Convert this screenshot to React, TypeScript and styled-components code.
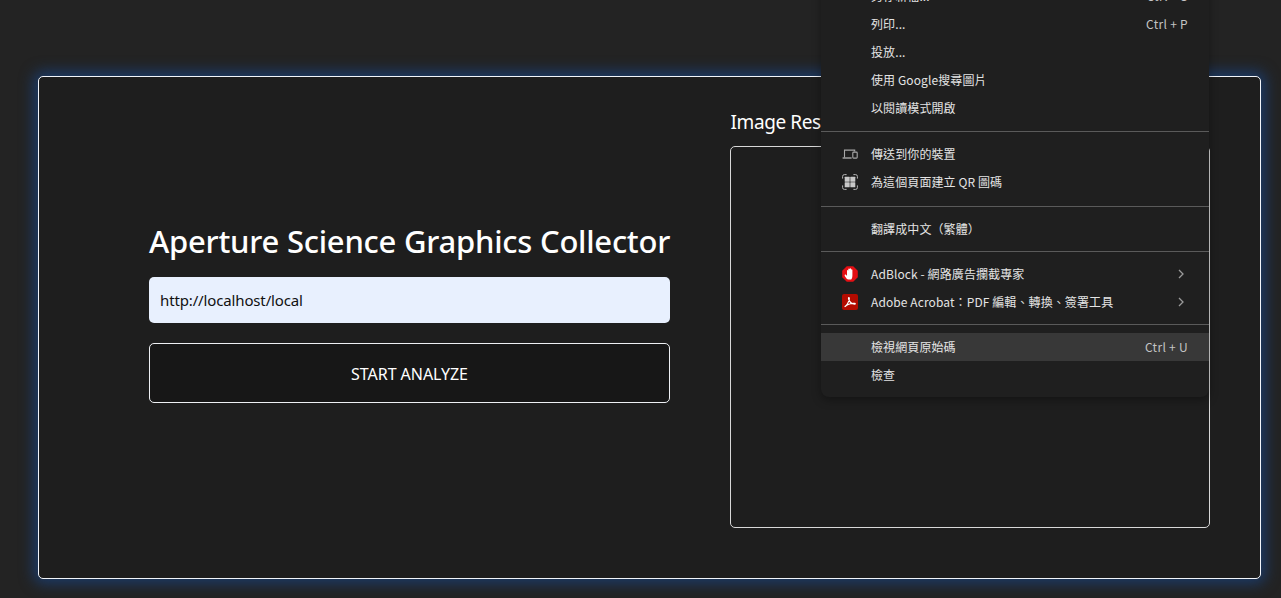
import React from "react";
import styled, { createGlobalStyle } from "styled-components";

const Global = createGlobalStyle`
  html, body { margin: 0; padding: 0; background: #232323; }
  #root { height: 598px; overflow: hidden; }
  * { box-sizing: border-box; }
`;

const Page = styled.div`
  position: relative;
  height: 598px;
  padding: 76px 20px 0 38px;
  overflow: hidden;
  font-family: "Noto Sans", "Open Sans", "Liberation Sans", sans-serif;
  color: #fff;
`;

const Card = styled.main`
  width: 1223px;
  height: 503px;
  display: flex;
  gap: 60px;
  padding: 0 50px 0 110px;
  background: #1e1e1e;
  border: 1px solid #f2f5fa;
  border-radius: 5px;
  box-shadow: 0 0 14px 5px #1c3a66;
`;

const FormColumn = styled.section`
  width: 521px;
  display: flex;
  flex-direction: column;
  padding-top: 143px;
`;

const Title = styled.h1`
  margin: 0 0 14px;
  font-size: 31px;
  line-height: 43px;
  font-weight: 500;
  white-space: nowrap;
  letter-spacing: -0.24px;
`;

const UrlInput = styled.div`
  height: 46px;
  display: flex;
  align-items: center;
  padding: 0 11px;
  background: #e8f0fe;
  border-radius: 5px;
  color: #111;
  font-size: 15px;
  letter-spacing: -0.14px;
`;

const StartButton = styled.button`
  height: 60px;
  margin-top: 20px;
  padding: 2px 0 0;
  background: #171717;
  color: #fff;
  border: 1px solid #eef0f4;
  border-radius: 5px;
  font-family: inherit;
  font-size: 16px;
  font-weight: 400;
  letter-spacing: -0.05px;
`;

const ResultsColumn = styled.section`
  width: 480px;
  display: flex;
  flex-direction: column;
  padding-top: 30px;
`;

const ResultsTitle = styled.h2`
  margin: 0 0 9px;
  padding-left: 0.5px;
  font-size: 19px;
  line-height: 30px;
  font-weight: 400;
  letter-spacing: -0.4px;
  white-space: nowrap;
`;

const ResultsBox = styled.div`
  height: 382px;
  border: 1px solid #d8d8d8;
  border-radius: 5px;
`;

const Menu = styled.nav`
  position: absolute;
  left: 821px;
  top: -18px;
  width: 388px;
  height: 415px;
  display: flex;
  flex-direction: column;
  background: #1f1f1f;
  border-radius: 0 0 8px 8px;
  box-shadow: 0 3px 10px rgba(0, 0, 0, 0.35);
  font-family: "Noto Sans CJK TC", "Noto Sans", sans-serif;
  font-size: 12px;
  color: #e4e4e4;
`;

const Row = styled.div<{ $active?: boolean }>`
  height: 28px;
  flex: none;
  display: flex;
  align-items: center;
  padding: 0 21px;
  background: ${(p) => (p.$active ? "#383838" : "transparent")};
  letter-spacing: 0.1px;
`;

const IconSlot = styled.span`
  width: 29px;
  flex: none;
  display: flex;
  align-items: center;
`;

const Label = styled.span`
  flex: 1;
  padding-bottom: 2px;
  white-space: nowrap;
`;

const Shortcut = styled.span`
  padding-bottom: 2px;
  color: #c4c4c4;
  white-space: nowrap;
  letter-spacing: 0.3px;
`;

const Chevron = styled.svg`
  width: 8px;
  height: 10px;
  margin-right: 3px;
  flex: none;
`;

const Divider = styled.hr<{ $before: number; $after: number }>`
  flex: none;
  width: 100%;
  height: 1px;
  border: 0;
  margin: ${(p) => p.$before}px 0 ${(p) => p.$after}px;
  background: #5a5a5a;
`;

const DevicesIcon = () => (
  <svg width="16" height="16" viewBox="0 0 16 16" fill="none" stroke="#a8a8a8" strokeWidth="1.1">
    <path d="M2.500 11.500V4.100h10.200V5.500" />
    <path d="M.6 12h9" strokeWidth="1.400" />
    <rect x="10.800" y="6.100" width="4.400" height="6" rx=".8" />
  </svg>
);

const QrIcon = () => (
  <svg width="16" height="16" viewBox="0 0 16 16" fill="none">
    <path d="M4.600.6H2.400A1.800 1.800 0 0 0 .6 2.400v2.200M11.400.6h2.200a1.800 1.800 0 0 1 1.800 1.800v2.200M4.600 15.400H2.400a1.800 1.800 0 0 1-1.800-1.800v-2.200M11.400 15.400h2.200a1.800 1.800 0 0 0 1.800-1.800v-2.200" stroke="#b5b5b5" strokeWidth="1" />
    <rect x="2.700" y="2.700" width="5" height="5" rx=".5" fill="#c8c8c8" />
    <rect x="8.300" y="2.700" width="5" height="5" rx=".5" fill="#c8c8c8" />
    <rect x="2.700" y="8.300" width="5" height="5" rx=".5" fill="#c8c8c8" />
    <rect x="8.300" y="8.300" width="5" height="5" rx=".5" fill="#c8c8c8" />
  </svg>
);

const AdBlockIcon = () => (
  <svg width="16" height="16" viewBox="0 0 16 16">
    <path d="M4.800.2h6.400l4.600 4.600v6.400l-4.600 4.600H4.800L.2 11.200V4.800z" fill="#e40f14" />
    <path d="M4.900 13c-.8-1.100-2.300-3-2.300-3.800 0-.8 1-.9 1.500-.3l.9.900V4.700c0-.9 1.200-.9 1.300 0V3.200c0-.9 1.300-.9 1.400 0v-.2c0-.9 1.400-.9 1.400 0V3.800c.1-.8 1.300-.8 1.300.1v5.800c0 1.500-.5 3-1.200 3.700H6.400c-.6 0-1.100-.100-1.500-.400z" fill="#fff" />
  </svg>
);

const AcrobatIcon = () => (
  <svg width="16" height="16" viewBox="0 0 16 16">
    <rect width="16" height="16" rx="2" fill="#b30b00" />
    <path d="M3 12.500c1.500-1 3.500-4.500 4.200-7.200.2-.9.100-1.800-.3-1.800-.5 0-.5 1-.1 2 .9 2.600 2.600 4.400 5.800 4.700.9 0 .9-.7 0-.8-2.300-.2-5 .3-7 1.400-1 .6-2 1.300-2.600 1.700z" fill="none" stroke="#fff" strokeWidth="1.200" strokeLinejoin="round" />
  </svg>
);

const Arrow = () => (
  <Chevron viewBox="0 0 8 10">
    <path d="M2 1l4 4-4 4" fill="none" stroke="#9a9a9a" strokeWidth="1.300" />
  </Chevron>
);

export default function App() {
  return (
    <>
      <Global />
      <Page>
        <Card>
          <FormColumn>
            <Title>Aperture Science Graphics Collector</Title>
            <UrlInput>http://localhost/local</UrlInput>
            <StartButton>START ANALYZE</StartButton>
          </FormColumn>
          <ResultsColumn>
            <ResultsTitle>Image Results</ResultsTitle>
            <ResultsBox />
          </ResultsColumn>
        </Card>
        <Menu>
          <Row><IconSlot /><Label>另存新檔...</Label><Shortcut>Ctrl + S</Shortcut></Row>
          <Row><IconSlot /><Label>列印...</Label><Shortcut>Ctrl + P</Shortcut></Row>
          <Row><IconSlot /><Label>投放...</Label></Row>
          <Row><IconSlot /><Label>使用 Google搜尋圖片</Label></Row>
          <Row><IconSlot /><Label>以閱讀模式開啟</Label></Row>
          <Divider $before={9} $after={8} />
          <Row><IconSlot><DevicesIcon /></IconSlot><Label>傳送到你的裝置</Label></Row>
          <Row><IconSlot><QrIcon /></IconSlot><Label>為這個頁面建立 QR 圖碼</Label></Row>
          <Divider $before={10} $after={8} />
          <Row><IconSlot /><Label>翻譯成中文（繁體）</Label></Row>
          <Divider $before={8} $after={8} />
          <Row><IconSlot><AdBlockIcon /></IconSlot><Label>AdBlock - 網路廣告攔截專家</Label><Arrow /></Row>
          <Row><IconSlot><AcrobatIcon /></IconSlot><Label>Adobe Acrobat：PDF 編輯、轉換、簽署工具</Label><Arrow /></Row>
          <Divider $before={8} $after={8} />
          <Row $active><IconSlot /><Label>檢視網頁原始碼</Label><Shortcut>Ctrl + U</Shortcut></Row>
          <Row><IconSlot /><Label>檢查</Label></Row>
        </Menu>
      </Page>
    </>
  );
}
